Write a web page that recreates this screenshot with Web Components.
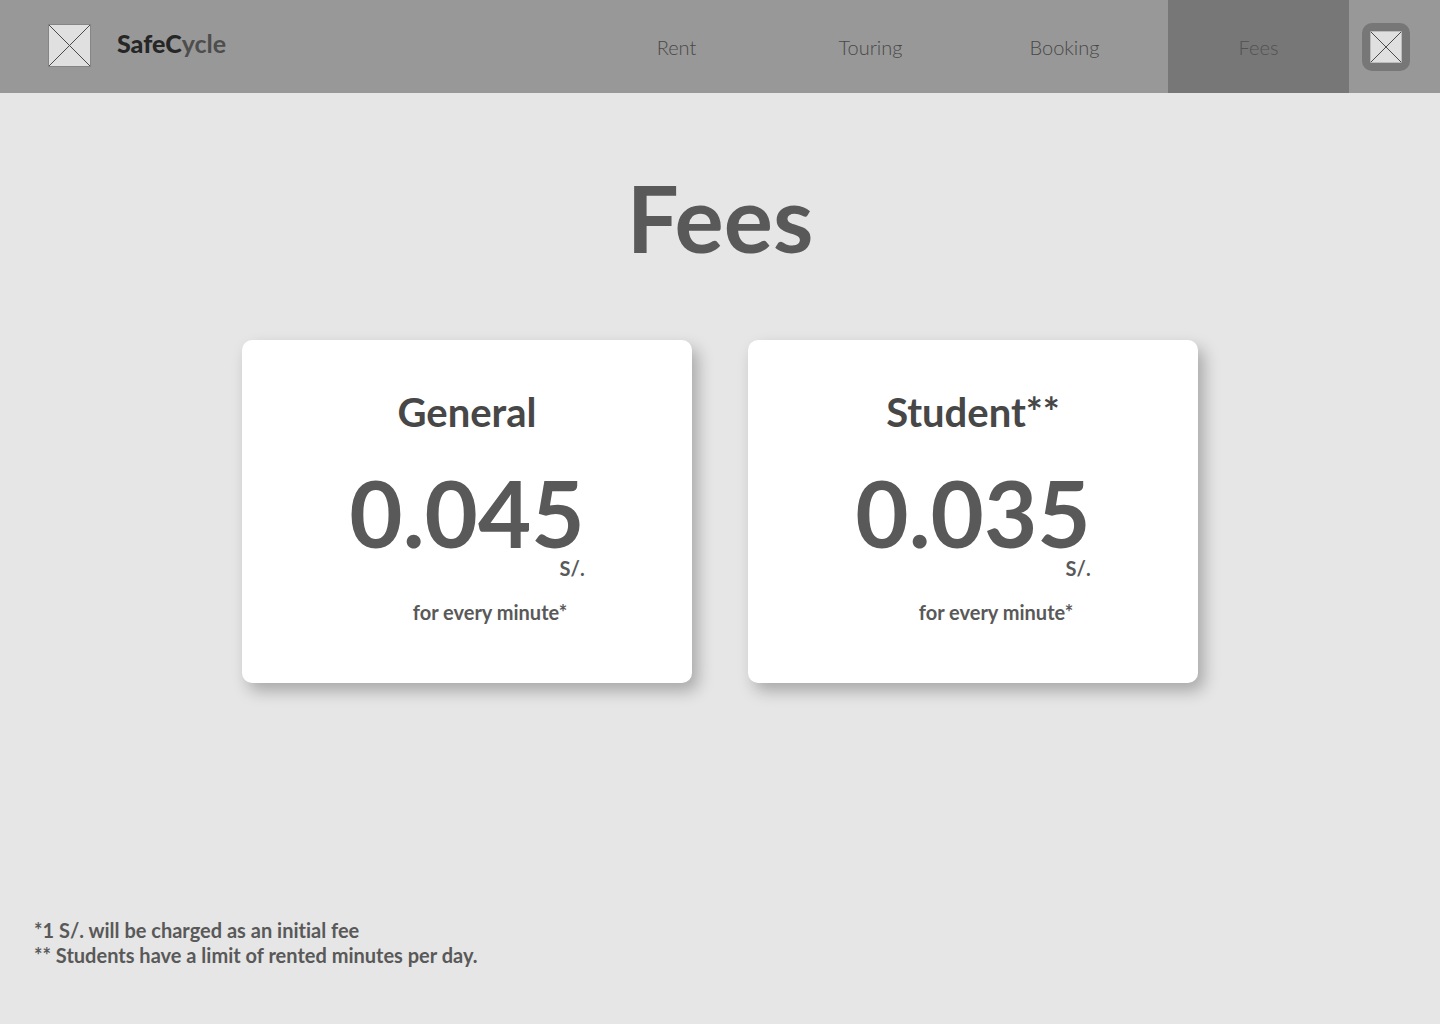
<!DOCTYPE html>
<html lang="en">
<head>
<meta charset="utf-8">
<meta name="viewport" content="width=device-width, initial-scale=1">
<title>SafeCycle - Fees</title>
<style>
  body { margin: 0; background: #e6e6e6; color: #595959; font-family: Lato, "Open Sans", sans-serif; font-variant-ligatures: none; }
</style>
</head>
<body>
<safe-page>
  <safe-header slot="header">
    <nav-link href="#rent">Rent</nav-link>
    <nav-link href="#touring">Touring</nav-link>
    <nav-link href="#booking">Booking</nav-link>
    <nav-link href="#fees" current>Fees</nav-link>
  </safe-header>
  <span slot="title">Fees</span>
  <fee-card price="0.045" unit="S/." per="for every minute*">General</fee-card>
  <fee-card price="0.035" unit="S/." per="for every minute*">Student**</fee-card>
  <foot-notes slot="notes">
    <span>*1 S/. will be charged as an initial fee</span>
    <span>** Students have a limit of rented minutes per day.</span>
  </foot-notes>
</safe-page>

<script>
  class BaseElement extends HTMLElement {
    constructor() {
      super();
      this.attachShadow({ mode: 'open' });
    }
    connectedCallback() {
      this.shadowRoot.innerHTML = this.render();
    }
  }

  customElements.define('image-box', class extends BaseElement {
    render() {
      return `
        <style>
          :host { display: block; width: 43px; height: 43px; }
          svg { display: block; width: 100%; height: 100%; }
        </style>
        <svg viewBox="0 0 43 43" aria-hidden="true">
          <rect width="43" height="43" fill="var(--image-box-edge, #858585)"/>
          <rect x="1" y="1" width="41" height="41" fill="#e0e0e0"/>
          <path d="M1 1L42 42M42 1L1 42" stroke="#4a4a4a" stroke-width="1" vector-effect="non-scaling-stroke"/>
        </svg>`;
    }
  });

  customElements.define('nav-link', class extends BaseElement {
    render() {
      const current = this.hasAttribute('current');
      return `
        <style>
          :host { display: flex; flex: 0 1 181px; }
          a { flex: 1; display: flex; align-items: center; justify-content: center;
              color: #484848; font-size: 20px; font-weight: 300; line-height: 24px; text-decoration: none; }
          a[aria-current] { background: #777; color: #525252; }
        </style>
        <a href="${this.getAttribute('href')}" ${current ? 'aria-current="page"' : ''}><slot></slot></a>`;
    }
  });

  customElements.define('safe-header', class extends BaseElement {
    render() {
      return `
        <style>
          :host { display: block; }
          header { display: flex; min-height: 93px; background: #989898; padding: 0 30px 0 48px; }
          .brand { display: flex; align-items: center; gap: 26px; padding-bottom: 2px; color: #4d4d4d; text-decoration: none;
                   font-size: 25px; font-weight: 700; line-height: 30px; }
          .brand span { padding-bottom: 6px; }
          .brand b { color: #262626; }
          nav { flex: 1; display: flex; justify-content: flex-end; gap: 13px; }
          button { align-self: center; display: grid; place-items: center; width: 48px; height: 48px;
                   margin-left: 13px; padding: 0; border: 0; border-radius: 10px; background: #777; }
          button image-box { width: 32px; height: 32px; --image-box-edge: #b0b0b0; }
        </style>
        <header>
          <a class="brand" href="#home"><image-box></image-box><span><b>SafeC</b>ycle</span></a>
          <nav aria-label="Main"><slot></slot></nav>
          <button type="button" aria-label="Account"><image-box></image-box></button>
        </header>`;
    }
  });

  customElements.define('fee-card', class extends BaseElement {
    render() {
      return `
        <style>
          :host { display: block; }
          article { display: flex; flex-direction: column; align-items: center; padding: 48px 16px 58px;
                    background: #fff; border-radius: 10px; box-shadow: 6px 8px 16px rgba(0, 0, 0, .27); }
          h2 { margin: 0; color: #474747; font-size: 40px; font-weight: 700; line-height: 48px; }
          .price { display: flex; flex-direction: column; align-items: flex-end; margin-top: 34px; }
          .amount { font-size: 92px; font-weight: 700; line-height: 86px; }
          .unit, .per { font-size: 20px; font-weight: 700; line-height: 25px; }
          .per { margin: 19px 0 0; padding-left: 46px; }
        </style>
        <article>
          <h2><slot></slot></h2>
          <div class="price">
            <span class="amount">${this.getAttribute('price')}</span>
            <span class="unit">${this.getAttribute('unit')}</span>
          </div>
          <p class="per">${this.getAttribute('per')}</p>
        </article>`;
    }
  });

  customElements.define('foot-notes', class extends BaseElement {
    render() {
      return `
        <style>
          :host { display: block; }
          footer { display: flex; flex-direction: column; font-size: 20px; font-weight: 700; line-height: 25px; }
        </style>
        <footer><slot></slot></footer>`;
    }
  });

  customElements.define('safe-page', class extends BaseElement {
    render() {
      return `
        <style>
          :host { display: flex; flex-direction: column; min-height: 100vh; }
          main { flex: 1; display: flex; flex-direction: column; align-items: center; padding: 69px 34px 56px; }
          h1 { margin: 0 0 67px; font-size: 92px; font-weight: 700; line-height: 111px; }
          .cards { display: grid; grid-template-columns: 1fr 1fr; gap: 56px; width: 100%; max-width: 956px; }
          .notes { align-self: flex-start; margin-top: auto; }
        </style>
        <slot name="header"></slot>
        <main>
          <h1><slot name="title"></slot></h1>
          <div class="cards"><slot></slot></div>
          <div class="notes"><slot name="notes"></slot></div>
        </main>`;
    }
  });
</script>
</body>
</html>
